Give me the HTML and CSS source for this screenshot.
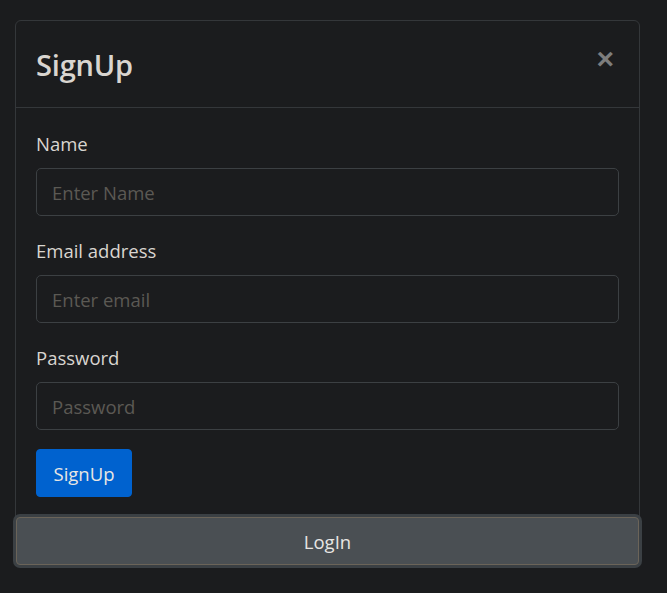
FILE: index.html
```html
<!DOCTYPE html>
<html>
<head>
<meta charset="utf-8">
<link rel="stylesheet" href="styles.css">
</head>
<body>
<div class="page">
  <div class="card">
    <div class="card-header">
      <h3 class="title">SignUp</h3>
      <span class="close">×</span>
    </div>
    <form class="card-body">
      <div class="group">
        <label class="label">Name</label>
        <input class="input" type="text" placeholder="Enter Name">
      </div>
      <div class="group">
        <label class="label">Email address</label>
        <input class="input" type="email" placeholder="Enter email">
      </div>
      <div class="group last">
        <label class="label">Password</label>
        <input class="input" type="password" placeholder="Password">
      </div>
      <div class="actions">
        <button type="button" class="btn btn-primary">SignUp</button>
      </div>
    </form>
    <button type="button" class="btn btn-login">LogIn</button>
  </div>
</div>
</body>
</html>
```

FILE: styles.css
```css
html, body {
  margin: 0;
  padding: 0;
  background: #1b1c1e;
  height: 100%;
}
body {
  font-family: "Open Sans", "Noto Sans", sans-serif;
  color: #d9d5d0;
}
.page {
  padding: 20px 27px 0 15px;
}
.card {
  border: 1px solid #34373a;
  border-radius: 6px;
  display: flex;
  flex-direction: column;
}
.card-header {
  display: flex;
  align-items: center;
  justify-content: space-between;
  padding: 0 20px;
  height: 86px;
  border-bottom: 1px solid #34373a;
}
.title {
  margin: 0;
  font-size: 29px;
  font-weight: 600;
  color: #d9d5d0;
  letter-spacing: -0.2px;
}
.close {
  font-family: "Liberation Sans", Arial, sans-serif;
  font-size: 30px;
  font-weight: 700;
  color: #7d7d7d;
  line-height: 1;
  margin-top: -10px;
  margin-right: 5px;
}
.card-body {
  display: flex;
  flex-direction: column;
  padding: 25px 20px 20px;
  margin: 0;
}
.group {
  display: flex;
  flex-direction: column;
  margin-bottom: 24px;
}
.group.last {
  margin-bottom: 19px;
}
.label {
  font-size: 18.5px;
  line-height: 22px;
  margin-bottom: 13px;
  color: #d9d5d0;
}
.input {
  box-sizing: border-box;
  height: 48px;
  padding: 0 15px;
  font-family: inherit;
  font-size: 18.5px;
  background: #1b1c1e;
  border: 1px solid #3c4043;
  border-radius: 5px;
  color: #d9d5d0;
  outline: none;
}
.input::placeholder {
  color: #5b5954;
}
.actions {
  display: flex;
}
.btn {
  font-family: inherit;
  font-size: 18.5px;
  line-height: 27px;
  border-radius: 4px;
  cursor: pointer;
}
.btn-primary {
  background: #0062cf;
  color: #e8e6e3;
  border: 1px solid #0062cf;
  padding: 0 15px;
  height: 48px;
  width: 96px;
}
.btn-login {
  height: 48px;
  margin: 0;
  background: #4a4f53;
  color: #e8e6e3;
  border: 1px solid #6b6459;
  box-shadow: 0 0 0 3px #3b4044;
  border-radius: 4px;
}
```
